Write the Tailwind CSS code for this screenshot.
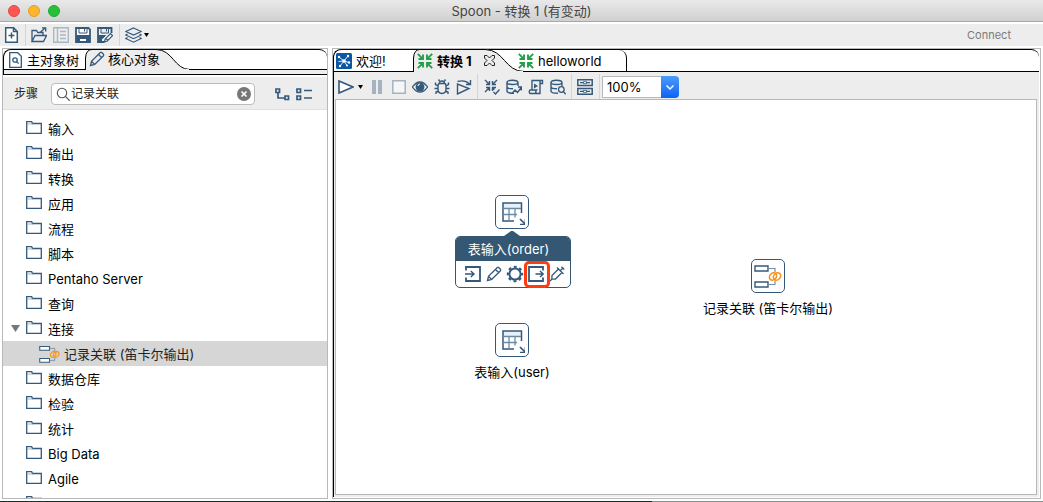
<!DOCTYPE html>
<html lang="zh-CN">
<head>
<meta charset="utf-8">
<title>Spoon - 转换 1 (有变动)</title>
<script src="https://cdn.jsdelivr.net/npm/@tailwindcss/browser@4"></script>
</head>
<body class="h-screen overflow-hidden bg-[#dcdcdc] font-['Inter','Noto_Sans_CJK_SC',sans-serif] text-[13px] leading-5 text-black">
<svg class="hidden" aria-hidden="true">
  <symbol id="folder" viewBox="0 0 16 14"><path d="M.7 12.300V.7h5l.8 1.800h8.800v9.800z" fill="#fff" stroke="#34597a" stroke-width="1.300"/><path d="M1 3h6" stroke="#8fa5b6" stroke-width=".8"/></symbol>
  <symbol id="pencil" viewBox="0 0 16 16"><path d="M1.500 14.500l1-4.200L11.300 1.500q.7-.6 1.400 0l1.800 1.800q.6.700 0 1.400L5.700 13.500zM9.500 3.500l3 3M2.700 10.500l2.900 2.900" fill="none" stroke="#34597a" stroke-width="1.300"/></symbol>
  <symbol id="converge" viewBox="0 0 16 16"><path d="M.8.8l5 5M6 1.500V6H1.500M15.200.8l-5 5M10 1.500V6h4.500M.8 15.200l5-5M6 14.500V10H1.500M15.200 15.200l-5-5M10 14.500V10h4.500" fill="none" stroke="currentColor" stroke-width="1.900"/></symbol>
  <symbol id="table" viewBox="0 0 26 26"><path d="M4 4h18v5H4z" fill="#e4f1fa"/><path d="M15 22H4V4h18.500v10" fill="none" stroke="#34597a" stroke-width="1.500"/><path d="M4 9.500h18M4 15.500h14M10 9.500v12M16 9.500v9" fill="none" stroke="#6c8ba3" stroke-width="1.300"/><path d="M21 20l5 5M26.500 20v5.500H21" fill="none" stroke="#34597a" stroke-width="1.700"/></symbol>
  <symbol id="join" viewBox="0 0 28 24"><path d="M1 2h13v5H1zM1 18h13v5H1z" fill="#fff" stroke="#34597a" stroke-width="1.400"/><path d="M14 4.500h7V8M14 20.500h7V17" fill="none" stroke="#7891a5" stroke-width="1.200"/><g fill="none" stroke="#f7941e" stroke-width="1.600"><ellipse cx="19" cy="12.500" rx="4" ry="3.200" transform="rotate(-45 19 12.500)"/><ellipse cx="23" cy="12.500" rx="4" ry="3.200" transform="rotate(-45 23 12.500)"/></g></symbol>
  <symbol id="db" viewBox="0 0 16 16"><path d="M8 14.300Q1 14.300 1 12V3.500Q1 1.200 6.500 1.200T12 3.500V7M1 3.500Q1 5.500 6.500 5.500T12 3.500M1 7.800Q1.500 9.800 7 9.800" fill="none" stroke="#34597a" stroke-width="1.400"/></symbol>
</svg>
<div class="flex h-full flex-col overflow-hidden bg-white">
  <header class="flex h-[22px] shrink-0 items-center border-b border-[#a9a9a9] bg-linear-to-b from-[#e9e9e9] to-[#d0d0d0] px-2">
    <div class="flex flex-1 gap-2">
      <button aria-label="关闭" class="size-3 rounded-full border border-[#e2463f] bg-[#fc5753]"></button>
      <button aria-label="最小化" class="size-3 rounded-full border border-[#df9f24] bg-[#fdb62c]"></button>
      <button aria-label="缩放" class="size-3 rounded-full border border-[#1fa830] bg-[#27c138]"></button>
    </div>
    <h1 class="text-[#444]">Spoon - 转换 1 (有变动)</h1>
    <div class="flex-1"></div>
  </header>

  <div class="mt-0.5 flex h-[22px] shrink-0 items-center bg-[#ededed] pl-1" role="toolbar" aria-label="文件">
    <button aria-label="新建"><svg class="size-4" viewBox="0 0 16 16" fill="none" stroke="#34597a" stroke-width="1.500"><path d="M1.700.7h7.800l3.800 3.800v10.800H1.700z" fill="#fff"/><path d="M9.500.7v3.800h3.800M4.500 8.500h6M7.500 5.500v6"/></svg></button>
    <span class="ml-[5px] mr-[5px] h-[22px] w-px bg-[#d4d4d4]"></span>
    <button aria-label="打开"><svg class="size-4" viewBox="0 0 16 16" fill="none" stroke="#34597a" stroke-width="1.300"><path d="M1 14.500V3.500h4.500l1.200 2H12v3M1 14.500l3-6h11.500l-3 6zM9.500 5L14.500.8M11 .8h3.700v3.700"/></svg></button>
    <button aria-label="浏览" class="ml-1.5"><svg class="size-4" viewBox="0 0 16 16" fill="none" stroke="#a8b8c4" stroke-width="1.400"><path d="M.7.7h14.600v14.600H.7zM4.500 1v14M7 4.500h6M7 8h6M7 11.500h6"/></svg></button>
    <button aria-label="保存" class="ml-1.5"><svg class="size-4" viewBox="0 0 16 16" fill="none" stroke="#34597a"><path d="M1 1h12.500L15 2.500V15H1z" stroke-width="1.800" fill="#fff"/><path d="M4 1v5h8V1M9.500 2v2.500"/><path d="M1.500 8.500h13V15h-3v-3.500h-7V15h-3z" fill="#34597a"/></svg></button>
    <button aria-label="另存为" class="ml-1.5"><svg class="size-4" viewBox="0 0 16 16" fill="none" stroke="#34597a"><path d="M7 15H1V1h13.500v5" stroke-width="1.800"/><path d="M4 1v5h7.500V1M9.500 2v2.500"/><path d="M1.500 8.500h7l-3 3h-1V15h-3z" fill="#34597a"/><path d="M7.500 15l.7-3 5.300-5.300 2 2-5.300 5.300zM9 11.500l2 2" fill="#fff" stroke-width="1.200"/></svg></button>
    <span class="ml-1.5 mr-[5px] h-[22px] w-px bg-[#d4d4d4]"></span>
    <button aria-label="视图" class="flex items-center gap-0.5"><svg class="h-4 w-[17px]" viewBox="0 0 17 16" fill="none" stroke="#34597a" stroke-width="1.200"><path d="M8.500 1l7.800 3.500-7.800 3.500L.7 4.500zM2.500 7L.7 8l7.800 3.700L16.300 8l-1.800-1M2.500 10.500l-1.800 1 7.800 3.700 7.800-3.700-1.800-1"/></svg><svg class="h-1 w-[5px]" viewBox="0 0 5 4"><path d="M0 0h5L2.500 4z"/></svg></button>
    <a href="#" class="ml-auto mr-8 text-[11px] text-[#7b7b7b]">Connect</a>
  </div>

  <main class="mt-0.5 flex min-h-0 flex-1 gap-1 px-0.5">
    <aside class="flex w-[326px] shrink-0 flex-col border border-[#b8b8b8] bg-white">
      <div class="flex h-[21px] shrink-0 rounded-t-lg border-t border-b border-l border-black" role="tablist">
        <button role="tab" aria-selected="false" class="flex w-[82px] items-center gap-[5px] pl-[5px] whitespace-nowrap"><svg class="h-4 w-[13px] shrink-0" viewBox="0 0 13 16" fill="none" stroke="#34597a" stroke-width="1.300"><path d="M.7.7h8l3.600 3.600v11H.7z"/><circle cx="6" cy="8" r="2.200"/><path d="M7.600 9.600l2 2"/></svg>主对象树</button>
        <button role="tab" aria-selected="true" class="relative flex w-[106px] items-center gap-[3px] pb-0.5 pl-[3px] whitespace-nowrap">
          <svg class="absolute -top-px -left-px h-[21px] w-[106px]" viewBox="0 0 106 21"><path d="M.5 21V9Q1 .5 7 .5h64c17 0 18 20 34 20" fill="#ededed"/><path d="M.5 21V9Q1 .5 7 .5h64c17 0 18 20 34 20" fill="none" stroke="#000"/><path d="M1 20.500h103" stroke="#ededed"/></svg>
          <svg class="relative size-4 shrink-0"><use href="#pencil"/></svg><span class="relative">核心对象</span>
        </button>
      </div>
      <div class="h-[5px] shrink-0 border-b border-l border-black bg-[#ededed]"></div>
      <div class="mt-0.5 flex h-[33px] shrink-0 items-center border-b border-[#e0e0e0] bg-[#ededed] pt-0.5 pl-[11px]">
        <label for="step" class="text-xs text-[#222]">步骤</label>
        <div class="ml-[13px] flex h-[22px] w-[204px] items-center rounded-[4px] border border-[#bcbcbc] bg-white pr-[3px] pl-1">
          <svg class="size-[15px] shrink-0" viewBox="0 0 15 15" fill="none" stroke="#555" stroke-width="1.100"><circle cx="6" cy="6" r="4.700"/><path d="M9.500 9.500l4.300 4.300"/></svg>
          <input id="step" value="记录关联" class="min-w-0 flex-1 text-xs text-[#222] outline-none">
          <button aria-label="清除"><svg class="size-[14px]" viewBox="0 0 14 14"><circle cx="7" cy="7" r="7" fill="#777"/><path d="M4.500 4.500l5 5M9.500 4.500l-5 5" stroke="#fff" stroke-width="1.600"/></svg></button>
        </div>
        <button aria-label="全部展开" class="ml-5"><svg class="h-[13px] w-[15px]" viewBox="0 0 15 13" fill="none" stroke="#34597a" stroke-width="1.700"><path d="M1 1h3.500v3.500H1zM10 8h3.500v3.500H10zM3 5v5h7"/></svg></button>
        <button aria-label="全部折叠" class="ml-[6px]"><svg class="h-[13px] w-[17px]" viewBox="0 0 17 13" fill="none" stroke="#34597a" stroke-width="1.700"><path d="M1 1h3.500v3.500H1zM1 8h3.500v3.500H1z"/><path d="M8 2.500h8M8 10h8" stroke-width="1.300"/></svg></button>
      </div>
      <ul class="min-h-0 flex-1 overflow-hidden pt-1.5" role="tree">
        <li class="flex h-[25px] items-center gap-1.5 pl-[23px]" role="treeitem"><svg class="mb-0.5 h-[14px] w-4"><use href="#folder"/></svg>输入</li>
        <li class="flex h-[25px] items-center gap-1.5 pl-[23px]" role="treeitem"><svg class="mb-0.5 h-[14px] w-4"><use href="#folder"/></svg>输出</li>
        <li class="flex h-[25px] items-center gap-1.5 pl-[23px]" role="treeitem"><svg class="mb-0.5 h-[14px] w-4"><use href="#folder"/></svg>转换</li>
        <li class="flex h-[25px] items-center gap-1.5 pl-[23px]" role="treeitem"><svg class="mb-0.5 h-[14px] w-4"><use href="#folder"/></svg>应用</li>
        <li class="flex h-[25px] items-center gap-1.5 pl-[23px]" role="treeitem"><svg class="mb-0.5 h-[14px] w-4"><use href="#folder"/></svg>流程</li>
        <li class="flex h-[25px] items-center gap-1.5 pl-[23px]" role="treeitem"><svg class="mb-0.5 h-[14px] w-4"><use href="#folder"/></svg>脚本</li>
        <li class="flex h-[25px] items-center gap-1.5 pl-[23px]" role="treeitem"><svg class="mb-0.5 h-[14px] w-4"><use href="#folder"/></svg>Pentaho Server</li>
        <li class="flex h-[25px] items-center gap-1.5 pl-[23px]" role="treeitem"><svg class="mb-0.5 h-[14px] w-4"><use href="#folder"/></svg>查询</li>
        <li class="flex h-[25px] items-center gap-1.5 pl-2" role="treeitem" aria-expanded="true"><svg class="h-[7px] w-[9px]" viewBox="0 0 9 7"><path d="M0 0h9L4.500 7z" fill="#777"/></svg><svg class="mb-0.5 h-[14px] w-4"><use href="#folder"/></svg>连接</li>
        <li class="flex h-[25px] items-center gap-1 bg-[#d6d6d6] pl-9 text-[#222]" role="treeitem" aria-selected="true"><svg class="h-[18px] w-[21px]"><use href="#join"/></svg>记录关联 (笛卡尔输出)</li>
        <li class="flex h-[25px] items-center gap-1.5 pl-[23px]" role="treeitem"><svg class="mb-0.5 h-[14px] w-4"><use href="#folder"/></svg>数据仓库</li>
        <li class="flex h-[25px] items-center gap-1.5 pl-[23px]" role="treeitem"><svg class="mb-0.5 h-[14px] w-4"><use href="#folder"/></svg>检验</li>
        <li class="flex h-[25px] items-center gap-1.5 pl-[23px]" role="treeitem"><svg class="mb-0.5 h-[14px] w-4"><use href="#folder"/></svg>统计</li>
        <li class="flex h-[25px] items-center gap-1.5 pl-[23px]" role="treeitem"><svg class="mb-0.5 h-[14px] w-4"><use href="#folder"/></svg>Big Data</li>
        <li class="flex h-[25px] items-center gap-1.5 pl-[23px]" role="treeitem"><svg class="mb-0.5 h-[14px] w-4"><use href="#folder"/></svg>Agile</li>
        <li class="flex h-[25px] items-center gap-1.5 pl-[23px]" role="treeitem"><svg class="mb-0.5 h-[14px] w-4"><use href="#folder"/></svg></li>
      </ul>
    </aside>

    <section class="flex min-w-0 flex-1 flex-col border border-[#b8b8b8] bg-white pr-px pb-px">
      <div class="flex h-[23px] shrink-0 rounded-t-lg border-t border-b border-l border-black" role="tablist">
        <button role="tab" aria-selected="false" class="flex w-20 items-center gap-1 pl-0.5 whitespace-nowrap"><svg class="size-4" viewBox="0 0 16 16"><rect width="16" height="16" rx="1.500" fill="#0a57a4"/><path d="M8 8L3 4M8 8l4-5M8 8l5 1.500M8 8l-4 5M8 8L2.500 8.500M8 8l3 4.500" stroke="#fff" stroke-width=".9"/><g fill="#fff"><circle cx="8" cy="8" r="1.800"/><circle cx="3" cy="4" r="1.200"/><circle cx="12" cy="3" r="1.200"/><circle cx="13" cy="9.500" r="1.200"/><circle cx="4" cy="13" r="1.200"/><circle cx="11" cy="12.500" r="1"/></g></svg>欢迎!</button>
        <button role="tab" aria-selected="true" class="relative flex w-[104px] items-center gap-1 pl-[3px] font-bold whitespace-nowrap">
          <svg class="absolute -top-px -left-px h-[23px] w-28" viewBox="0 0 112 23"><path d="M.5 23V9Q1 .5 7 .5h65c19 0 20 22 39 22" fill="#ededed"/><path d="M.5 23V9Q1 .5 7 .5h65c19 0 20 22 39 22" fill="none" stroke="#000"/><path d="M1 22.500h109" stroke="#ededed"/></svg>
          <svg class="relative size-4 shrink-0 text-[#24a04a]"><use href="#converge"/></svg><span class="relative">转换 1</span>
          <svg class="relative ml-2 size-[11px]" viewBox="0 0 11 11" fill="none" stroke="#222"><path d="M.5.5h2.500l2.500 2.500L8 .5h2.500V3L8 5.500 10.500 8v2.500H8L5.500 8 3 10.500H.5V8L3 5.500.5 3z"/></svg>
        </button>
        <button role="tab" aria-selected="false" class="relative flex w-[109px] items-center gap-1 rounded-tr-lg border-r border-black whitespace-nowrap"><svg class="size-4 text-[#24a04a]"><use href="#converge"/></svg>helloworld</button>
      </div>

      <div class="flex min-h-0 flex-1 flex-col border-l border-black bg-[#ededed] pr-0.5 pb-0.5 pl-px">
        <div class="flex h-[27px] shrink-0 items-center pt-0.5 pl-[3px]" role="toolbar" aria-label="转换">
          <button aria-label="运行" class="flex items-center gap-1"><svg class="h-4 w-4" viewBox="0 0 16 16"><path d="M1 2v12l14-6z" fill="#fff" stroke="#34597a" stroke-width="1.600"/></svg><svg class="h-1 w-[5px]" viewBox="0 0 5 4"><path d="M0 0h5L2.500 4z"/></svg></button>
          <button aria-label="暂停" class="ml-[9px]"><svg class="h-[14px] w-[10px]" viewBox="0 0 10 14"><path d="M0 0h4v14H0zM6 0h4v14H6z" fill="#a4b3bf"/></svg></button>
          <button aria-label="停止" class="ml-2.5"><svg class="size-[14px]" viewBox="0 0 14 14"><path d="M.8.8h12.400v12.400H.8z" fill="#f6f6f6" stroke="#a4b3bf" stroke-width="1.500"/></svg></button>
          <button aria-label="预览" class="ml-1.5"><svg class="size-4" viewBox="0 0 16 16"><path d="M.5 8Q4 3 8 3t7.500 5Q12 13 8 13T.5 8z" fill="#fff" stroke="#34597a" stroke-width="1.300"/><circle cx="8" cy="8" r="4.500" fill="#34597a"/><path d="M6 7a2 2 0 012-2" stroke="#fff" fill="none"/></svg></button>
          <button aria-label="调试" class="ml-1.5"><svg class="size-4" viewBox="0 0 16 16" fill="none" stroke="#34597a" stroke-width="1.400"><path d="M5 4.500h6M4 7q0-2.500 1.500-2.500Q5.500 2 8 2t2.500 2.500Q12 4.500 12 7v3q0 4.500-4 4.500T4 10zM5.500 2L4.500.5M10.500 2l1-1.500M4 7L1.500 5.500V3.500M12 7l2.500-1.500V3.500M4 9.500H.5M12 9.500h3.500M4.500 12l-2.500 1v2M11.500 12l2.500 1v2"/></svg></button>
          <button aria-label="重放" class="ml-1.5"><svg class="size-4" viewBox="0 0 16 16" fill="none" stroke="#34597a" stroke-width="1.400"><path d="M1.500 5v10L13 9.500zM1.500 2.500Q9 .5 13.500 5M14.500 1v4.500H10"/></svg></button>
          <span class="mx-[5px] h-[26px] w-px bg-[#d4d4d4]"></span>
          <button aria-label="校验" class="ml-px"><svg class="size-4" viewBox="0 0 16 16"><g fill="none" stroke="#34597a" stroke-width="1.400"><path d="M1 1l4.500 4.500M5.500 2v3.500H2M13 1L8.500 5.500M8.500 2v3.500H12M1 13l4.500-4.500M5.500 12V8.500H2M8.500 12V8.500H12M8.500 8.500l2 2M9.500 13l2 2 4-4.500"/></g></svg></button>
          <button aria-label="影响分析" class="ml-1.5"><svg class="size-4" viewBox="0 0 16 16" fill="none" stroke="#34597a" stroke-width="1.400"><use href="#db"/><path d="M6 14.500l3-3.500 2.500 2.500 3.800-5M12 8h3.300v3.500"/></svg></button>
          <button aria-label="SQL" class="ml-1.5"><svg class="size-4" viewBox="0 0 16 16" fill="none" stroke="#34597a" stroke-width="1.400"><path d="M4 11V1.500h10.500v3H12V14.500H2q-1.500-1.500 0-3.500h6.500q-1.500 2 0 3.500M12 4.500V1.500"/><path d="M6 4.500v5l4-2.500z" fill="#34597a" stroke="none"/></svg></button>
          <button aria-label="浏览数据库" class="ml-1.5"><svg class="size-4" viewBox="0 0 16 16" fill="none" stroke="#34597a" stroke-width="1.300"><use href="#db"/><circle cx="11.300" cy="10.500" r="2.800"/><path d="M13.300 12.500l2.400 2.700"/></svg></button>
          <span class="mx-[5px] h-[26px] w-px bg-[#d4d4d4]"></span>
          <button aria-label="显示结果"><svg class="size-4" viewBox="0 0 16 16" fill="none" stroke="#34597a" stroke-width="1.500"><path d="M.8.8h14.400v5.700H.8zM.8 9.500h14.400v5.700H.8z"/><path d="M3 3.600h10M3 12.400h10" stroke-width="1.200"/><path d="M6.500 2.600h3v2h-3zM6.500 11.400h3v2h-3z" fill="#fff" stroke-width=".8"/></svg></button>
          <span class="ml-1.5 mr-0.5 h-[26px] w-px bg-[#d4d4d4]"></span>
          <div class="relative h-[22px] w-[77px]">
            <select aria-label="缩放比例" class="h-full w-full appearance-none rounded-r-[4px] border border-[#b8b8b8] bg-white pl-1 text-[13px] outline-none"><option>100%</option></select>
            <svg class="pointer-events-none absolute top-0 right-0 h-[22px] w-[18px] rounded-r-[4px] bg-linear-to-b from-[#4c9bfa] to-[#0a62f6]" viewBox="0 0 18 22"><path d="M5.500 9.500L9 13l3.500-3.500" fill="none" stroke="#fff" stroke-width="1.500"/></svg>
          </div>
        </div>

        <div class="relative min-h-0 flex-1 overflow-hidden border border-[#b8b8b8] bg-white">
          <div class="absolute top-[95px] left-[118px] flex w-[116px] flex-col items-center">
            <button aria-label="表输入(order)" class="flex size-[34px] items-center justify-center rounded-[5px] border border-[#34597a]"><svg class="size-[26px] overflow-visible"><use href="#table"/></svg></button>
            <svg class="mt-0.5 h-[5px] w-4" viewBox="0 0 16 5"><path d="M0 5L7 0h2l7 5z" fill="#345873"/></svg>
            <div class="ml-px w-full overflow-hidden rounded-[5px] border border-[#345873] bg-white">
              <div class="flex h-6 items-center justify-center bg-[#345873] pr-2 pb-px text-white">表输入(order)</div>
              <div class="flex h-[26px] items-center gap-[5px] pl-[9px]">
                <button aria-label="输入连接"><svg class="size-4" viewBox="0 0 16 16" fill="none" stroke="#34597a" stroke-width="1.800"><path d="M1 4.500V1h14v14H1v-3.500"/><path d="M0 8h8.500M5.800 5L9 8l-3.200 3" stroke-width="1.400"/></svg></button>
                <button aria-label="编辑"><svg class="size-4"><use href="#pencil"/></svg></button>
                <button aria-label="菜单"><svg class="size-4 overflow-visible" viewBox="0 0 16 16" fill="none" stroke="#34597a"><circle cx="8" cy="8" r="5.600" stroke-width="2"/><circle cx="8" cy="8" r="7.200" stroke-width="2" stroke-dasharray="2.900 2.755" stroke-dashoffset="1.450"/></svg></button>
                <button aria-label="输出连接"><svg class="size-4" viewBox="0 0 16 16" fill="none" stroke="#34597a" stroke-width="1.800"><path d="M15 4.500V1H1v14h14v-3.500"/><path d="M7.500 8H15M12 5l3.200 3-3.200 3" stroke-width="1.400"/></svg></button>
                <button aria-label="注入"><svg class="size-4" viewBox="0 0 16 16" fill="none" stroke="#34597a" stroke-width="1.300"><path d="M1 15l1.800-1.800L3 9.500 9.500 3l3.500 3.500L6.500 13l-3.700.2M8 1.500L14.500 8M11.300 4.700L14 2M12.500.7l2.800 2.800"/></svg></button>
              </div>
            </div>
          </div>
          <div class="absolute top-[161px] left-[188px] h-[27px] w-[26px] rounded-[5px] border-[3px] border-[#ff3b0f]"></div>

          <div class="absolute top-[223px] left-[118px] flex w-[116px] flex-col items-center gap-[5px]">
            <button aria-label="表输入(user)" class="flex size-[34px] items-center justify-center rounded-[5px] border border-[#34597a]"><svg class="size-[26px] overflow-visible"><use href="#table"/></svg></button>
            <span>表输入(user)</span>
          </div>
          <div class="absolute top-[159px] left-[362px] flex w-[140px] flex-col items-center gap-[5px]">
            <button aria-label="记录关联" class="flex size-[34px] items-center justify-center rounded-[5px] border border-[#34597a]"><svg class="h-6 w-7"><use href="#join"/></svg></button>
            <span class="whitespace-nowrap">记录关联 (笛卡尔输出)</span>
          </div>
        </div>
      </div>
    </section>
  </main>
  <footer class="mt-0.5 flex h-px shrink-0"><span class="w-5/8 bg-[#17302c]"></span><span class="flex-1 bg-[#869090]"></span></footer>
</div>
</body>
</html>
